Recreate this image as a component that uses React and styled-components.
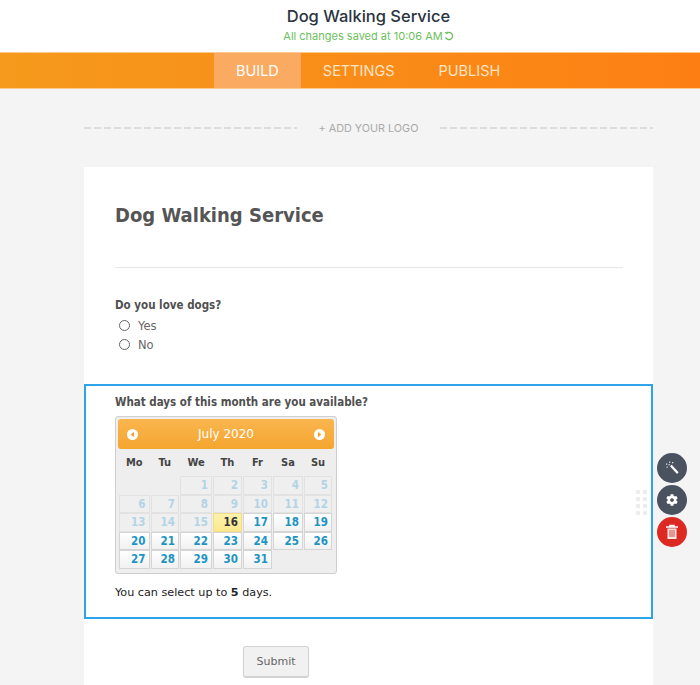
import React from 'react';
import styled, { createGlobalStyle } from 'styled-components';
import { FaCog } from 'react-icons/fa';

const Global = createGlobalStyle`
  html, body { margin: 0; padding: 0; background: #f4f4f4; }
  body { height: 685px; overflow: hidden; }
  * { box-sizing: border-box; }
`;
const Page = styled.div`
  position: relative; width: 700px; height: 685px; overflow: hidden; display: flex; flex-direction: column;
  font-family: "DejaVu Sans", Verdana, sans-serif;
`;
const Header = styled.header`
  height: 52px; flex: none; background: #fff; display: flex; flex-direction: column; align-items: center; padding: 6px 0 0 37px;
  font-family: Inter, "Liberation Sans", sans-serif;
`;
const Title = styled.h1`
  margin: 0; font-size: 16.5px; line-height: 21px; font-weight: 500; color: #2a3440;
`;
const Saved = styled.div`
  display: flex; align-items: center; gap: 1px; margin-top: 2px; font-size: 11px; line-height: 14px; color: #6cbf5c;
`;
const Nav = styled.nav`
  height: 37px; flex: none; display: flex; padding-left: 214px;
  background: linear-gradient(90deg, #f59a1c 0%, #fd7f14 100%);
  border-top: 1px solid #fbc88f; border-bottom: 1px solid #fbc88f;
  font-family: Inter, "Liberation Sans", sans-serif;
`;
const Tab = styled.div`
  height: 100%; padding: 0 22px; display: flex; align-items: center; justify-content: center;
  font-size: 14.5px; color: ${p => p.$active ? '#fff' : '#ffe3c6'};
  background: ${p => p.$active ? '#fbaa62' : 'transparent'};
`;
const LogoRow = styled.div`
  height: 78px; flex: none; margin: 0 47px 0 84px; display: flex; align-items: center; gap: 22px;
`;
const Dash = styled.div`
  flex: 1; height: 2px;
  background: repeating-linear-gradient(90deg, #dcdcdc 0 7px, transparent 7px 10px);
`;
const LogoText = styled.div`
  font-family: Inter, "Liberation Sans", sans-serif; font-size: 10.8px; color: #a9a9a9;
`;
const Card = styled.main`
  flex: none; width: 569px; height: 518px; margin-left: 84px; background: #fff;
`;
const Intro = styled.div`
  padding: 34px 30px 0 31px; height: 217px;
`;
const FormTitle = styled.h2`
  margin: 0; font-family: "DejaVu Sans Condensed", "DejaVu Sans", sans-serif;
  font-size: 20px; line-height: 28px; font-weight: 700; color: #555;
`;
const Rule = styled.hr`
  margin: 38px 0 0; border: 0; border-top: 1px solid #e6e6e6;
`;
const Label = styled.div`
  font-family: "DejaVu Sans Condensed", "DejaVu Sans", sans-serif;
  font-size: 11.5px; line-height: 16px; font-weight: 700; color: #505050;
`;
const Question = styled(Label)`
  margin-top: 29px;
`;
const Radio = styled.label`
  display: flex; align-items: center; gap: 8px; height: 19px; padding-left: 4px;
  font-size: 11.5px; color: #666;
  &:first-of-type { margin-top: 3px; }
`;
const Circle = styled.span`
  width: 11px; height: 11px; border-radius: 50%; border: 1px solid #666; background: #fff;
`;
const Selected = styled.section`
  height: 235px; padding: 8px 29px; border: 2px solid #2ea3ea;
`;
const Calendar = styled.div`
  width: 222px; height: 158px; margin-top: 6px; border: 1px solid #cfcfcf; border-radius: 3px;
  background: #eeeeee; padding: 2px;
`;
const CalHead = styled.div`
  height: 30px; border-radius: 3px; display: flex; align-items: center; justify-content: space-between;
  padding: 0 9px; background: linear-gradient(#f9b64f, #f5a52f);
  color: #fff; font-size: 12px; font-weight: 400;
`;
const Arrow = styled.svg`
  width: 11px; height: 11px; flex: none;
`;
const Grid = styled.div`
  display: grid; grid-template-columns: 31.5px 29.5px 33px 30px 30px 31px 29px; margin-left: 1px;
  grid-auto-rows: 18.5px;
`;
const Weekdays = styled(Grid)`
  grid-auto-rows: 27px;
`;
const Dow = styled.div`
  display: flex; align-items: center; justify-content: center; padding-right: 1px;
  font-family: "DejaVu Sans Condensed", "DejaVu Sans", sans-serif; font-size: 11px; font-weight: 700; color: #444;
`;
const Cell = styled.div`
  margin: 0 1px 0 0; height: 18.5px; border: 1px solid ${p => p.$today ? '#f4dc86' : '#d5d5d5'};
  text-align: right; padding-right: 3px;
  font-family: "DejaVu Sans Condensed", "DejaVu Sans", sans-serif; font-size: 11.5px; line-height: 16.5px; font-weight: 700;
  color: ${p => p.$today ? '#333' : '#1c94c4'};
  background: ${p => p.$today ? 'linear-gradient(#fdf2ac,#fbe88e)' : 'linear-gradient(#fff,#f1f1f1)'};
  ${p => p.$off && `
    color: #b3d4e6; background: #efefef; border-color: #e2e2e2;
  `}
`;
const Empty = styled.div``;
const Hint = styled.div`
  margin-top: 11px; font-size: 11.2px; line-height: 15px; color: #222;
`;
const SubmitRow = styled.div`
  padding: 27px 0 0 159px;
`;
const Submit = styled.button`
  width: 66px; height: 32px; border: 1px solid #d2d2d2; border-bottom-width: 2px; border-radius: 3px; background: #f1f1f1;
  font-family: inherit; font-size: 11px; color: #666; padding: 0;
`;
const Handle = styled.div`
  position: absolute; left: 636px; top: 490px; display: grid; grid-template-columns: 4px 4px; gap: 3px;
`;
const Dot = styled.span`
  width: 4px; height: 4px; border-radius: 1px; background: #ececec;
`;
const Tools = styled.div`
  position: absolute; left: 657px; top: 453px; display: flex; flex-direction: column; gap: 2px;
`;
const Tool = styled.div`
  width: 30px; height: 30px; border-radius: 50%; display: flex; align-items: center; justify-content: center;
  background: ${p => p.$danger ? '#dc2a22' : '#4a5260'}; color: #fff;
`;

const weekdays = ['Mo','Tu','We','Th','Fr','Sa','Su'];

function ArrowIcon({ right }) {
  return (
    <Arrow viewBox="0 0 11 11">
      <circle cx="5.500" cy="5.500" r="5.500" fill="#fff" />
      <path d={right ? 'M4 2.800l3.400 2.700L4 8.200z' : 'M7 2.800L3.600 5.500 7 8.200z'} fill="#f5a52f" />
    </Arrow>
  );
}

export default function App() {
  const cells = [<Empty key="a" />, <Empty key="b" />];
  for (let d = 1; d <= 31; d++) {
    cells.push(<Cell key={d} $off={d < 16} $today={d === 16}>{d}</Cell>);
  }
  return (
    <Page>
      <Global />
      <Header>
        <Title>Dog Walking Service</Title>
        <Saved>
          All changes saved at 10:06 AM
          <svg width="10" height="10" viewBox="0 0 10 10" fill="none" stroke="#6cbf5c" strokeWidth="1.300">
            <path d="M2.600 2.200A3.600 3.600 0 1 1 1.600 6.200" />
            <path d="M1 1.200l1.700 1.200 1-1.600" strokeWidth="1.100" />
          </svg>
        </Saved>
      </Header>
      <Nav>
        <Tab $active>BUILD</Tab>
        <Tab>SETTINGS</Tab>
        <Tab>PUBLISH</Tab>
      </Nav>
      <LogoRow>
        <Dash />
        <LogoText>+ ADD YOUR LOGO</LogoText>
        <Dash />
      </LogoRow>
      <Card>
        <Intro>
          <FormTitle>Dog Walking Service</FormTitle>
          <Rule />
          <Question>Do you love dogs?</Question>
          <Radio><Circle />Yes</Radio>
          <Radio><Circle />No</Radio>
        </Intro>
        <Selected>
          <Label>What days of this month are you available?</Label>
          <Calendar>
            <CalHead><ArrowIcon /><span>July 2020</span><ArrowIcon right /></CalHead>
            <Weekdays>{weekdays.map(w => <Dow key={w}>{w}</Dow>)}</Weekdays>
            <Grid>{cells}</Grid>
          </Calendar>
          <Hint>You can select up to <b>5</b> days.</Hint>
        </Selected>
        <SubmitRow><Submit>Submit</Submit></SubmitRow>
      </Card>
      <Tools>
        <Tool>
          <svg width="18" height="18" viewBox="0 0 18 18">
            <path d="M7 7.200l1.700-1.500 6.700 7.300c.5.600-1.200 2.100-1.800 1.500z" fill="#fff" />
            <g fill="#d5d8dc">
              <rect x="6" y="2.500" width="1.300" height="1.300" /><rect x="9" y="3" width="1.300" height="1.300" />
              <rect x="3" y="4.500" width="1.300" height="1.300" /><rect x="5.500" y="5" width="1.300" height="1.300" />
              <rect x="3.500" y="7.500" width="1.300" height="1.300" />
            </g>
          </svg>
        </Tool>
        <Tool><FaCog size={12} /></Tool>
        <Tool $danger>
          <svg width="14" height="16" viewBox="0 0 14 16" fill="none" stroke="#fff">
            <path d="M1 3h12M5 3V1.500h4V3" strokeWidth="1.400" />
            <path d="M2.500 4.500h9V15h-9z" fill="#fff" stroke="none" opacity="0.900" />
            <path d="M5 6v7M7 6v7M9 6v7" stroke="#dc2a22" strokeWidth="0.900" />
          </svg>
        </Tool>
      </Tools>
      <Handle>
        {Array.from({ length: 8 }, (_, i) => <Dot key={i} />)}
      </Handle>
    </Page>
  );
}
